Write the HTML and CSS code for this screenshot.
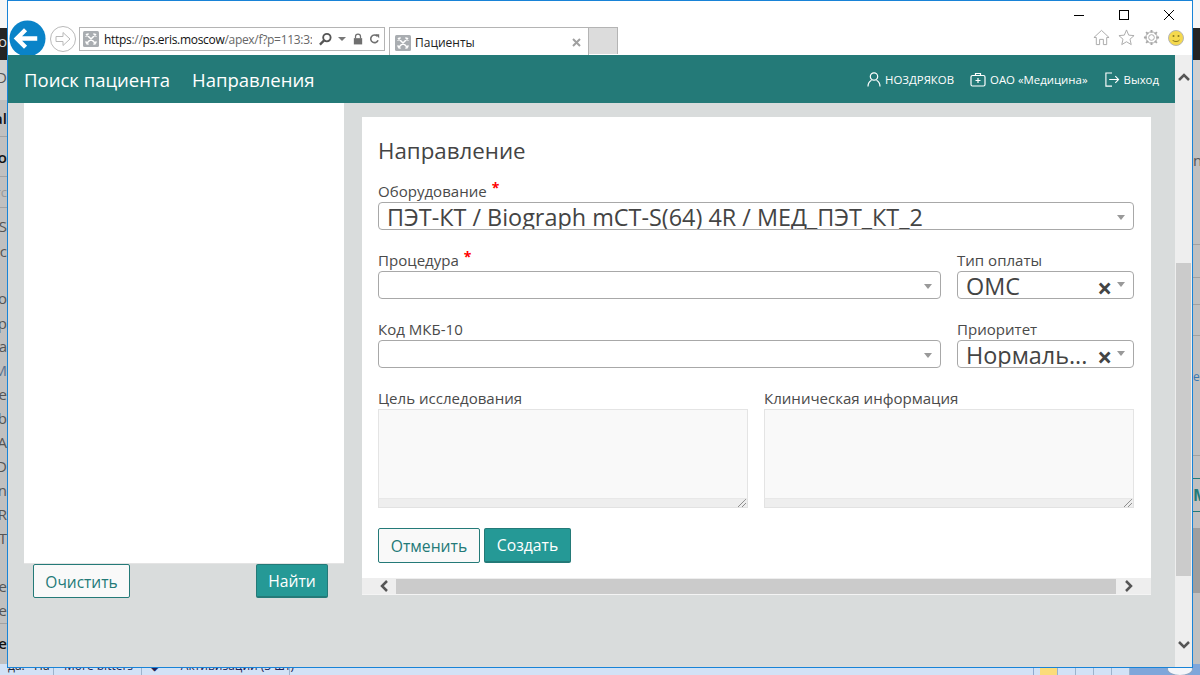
FILE: index.html
```html
<!DOCTYPE html>
<html lang="ru">
<head>
<meta charset="utf-8">
<title>Пациенты</title>
<link rel="stylesheet" href="styles.css">
</head>
<body>
<div class="desktop">
  <div class="behind behind-top"></div>
  <div class="behind behind-dark"></div>
  <div class="behind behind-light"></div>
  <span class="bit bit-dark l1">co</span>
  <span class="bit l2">D</span>
  <span class="bit b l3">al</span>
  <span class="bit b l4">o</span>
  <span class="bit g l5">rc</span>
  <span class="bit l6">S</span>
  <span class="bit l7">c</span>
  <span class="bit l8">To</span>
  <span class="bit l9">p</span>
  <span class="bit l10">sa</span>
  <span class="bit m l11">M</span>
  <span class="bit l12">se</span>
  <span class="bit l13">ab</span>
  <span class="bit l14">A</span>
  <span class="bit l15">D</span>
  <span class="bit l16">In</span>
  <span class="bit l17">R</span>
  <span class="bit l18">T</span>
  <span class="bit l19">ce</span>
  <span class="bit l20">ce</span>
  <span class="bit b l21">ge</span>
  <i class="rule r1"></i><i class="rule r2"></i><i class="rule r3"></i><i class="rule r4"></i>
  <span class="bit-r p1">nt</span>
  <span class="bit-r blue p2">e</span>
  <span class="bit-r teal p3">Ме</span>
  <i class="rule-r q1"></i><i class="rule-r q2"></i><i class="rule-r q3"></i><i class="rule-r q4"></i><i class="rule-r q5"></i>
  <i class="rule-r t q6"></i><i class="rule-r t q7"></i>
  <i class="band-r"></i>

  <div class="taskbar">
    <span class="task task-a">да. · На ·</span>
    <span class="task task-b">More bitters</span>
    <span class="task task-c">◆ &nbsp;&nbsp;&nbsp;&nbsp;&nbsp; Активизации (3 шт)</span>
    <span class="task-fill"></span>
    <span class="tray"><i class="tray-on"></i><i></i><i></i><i></i><i></i><b class="tray-end"><em class="orb"></em></b></span>
  </div>

  <div class="window">
    <div class="chrome">
      <div class="winbtns">
        <svg class="wb" viewBox="0 0 12 12"><path d="M1 6.500h10" stroke="#000" fill="none"/></svg>
        <svg class="wb" viewBox="0 0 12 12"><rect x="1.500" y="1.500" width="9" height="9" stroke="#000" fill="none"/></svg>
        <svg class="wb" viewBox="0 0 12 12"><path d="M1 1l10 10M11 1L1 11" stroke="#000" fill="none"/></svg>
      </div>
      <div class="toolbar">
        <svg class="back" viewBox="0 0 38 38"><circle cx="19" cy="19" r="18.500" fill="#0a83c8"/><path d="M8 19h21M17 10l-9 9 9 9" stroke="#fff" stroke-width="4.500" fill="none"/></svg>
        <svg class="forward" viewBox="0 0 26 26"><circle cx="13" cy="13" r="12.500" fill="#fff" stroke="#b9b9b9"/><path d="M6 10.500h7v-4l7 6.500-7 6.500v-4H6z" fill="none" stroke="#b9b9b9"/></svg>
        <div class="address">
          <svg class="favicon" viewBox="0 0 16 16"><rect width="16" height="16" rx="1.500" fill="#a9adb1"/><path d="M3 3l10 10M13 3L3 13M2.500 5.500l3-3M10.500 13.500l3-3M2.500 10.500l3 3M10.500 2.500l3 3" stroke="#fff" stroke-width="1.500" fill="none"/></svg>
          <span class="url"><b>https</b>://<b>ps.eris.moscow</b>/apex/f?p=113:3:</span>
          <svg class="aico" viewBox="0 0 14 14"><circle cx="8.500" cy="5.500" r="4" stroke="#555" stroke-width="2" fill="none"/><path d="M5.500 8.500L1 13" stroke="#555" stroke-width="2.500"/></svg>
          <svg class="caret" viewBox="0 0 8 4"><path d="M0 0h8L4 4z" fill="#777"/></svg>
          <svg class="aico lock" viewBox="0 0 12 14"><rect x="1" y="6" width="10" height="7.500" fill="#6f6f6f"/><path d="M3 6.500V4a3 3 0 016 0v2.500" stroke="#6f6f6f" stroke-width="1.500" fill="none"/></svg>
          <svg class="aico refresh" viewBox="0 0 14 14"><path d="M11.500 8.500A4.800 4.800 0 1 1 10.500 3.500" stroke="#6f6f6f" stroke-width="2" fill="none"/><path d="M8 1h5v5z" fill="#6f6f6f"/></svg>
        </div>
        <div class="tab">
          <svg class="favicon" viewBox="0 0 16 16"><rect width="16" height="16" rx="1.500" fill="#a9adb1"/><path d="M3 3l10 10M13 3L3 13M2.500 5.500l3-3M10.500 13.500l3-3M2.500 10.500l3 3M10.500 2.500l3 3" stroke="#fff" stroke-width="1.500" fill="none"/></svg>
          <span class="tab-title">Пациенты</span>
          <svg class="tab-x" viewBox="0 0 9 9"><path d="M1 1l7 7M8 1L1 8" stroke="#a0a0a0" stroke-width="2"/></svg>
        </div>
        <div class="newtab"></div>
        <div class="toolicons">
          <svg class="ti" viewBox="0 0 18 18"><path d="M1 9l8-7.500L17 9h-2.500v7.500H11V11H7v5.500H3.500V9z" fill="#fff" stroke="#a8a8a8"/></svg>
          <svg class="ti" viewBox="0 0 18 18"><path d="M9 1l2.300 5.500 5.700.5-4.300 3.800 1.300 5.700L9 13.500l-5 3 1.300-5.700L1 7l5.700-.5z" fill="#fff" stroke="#a8a8a8"/></svg>
          <svg class="ti" viewBox="0 0 18 18"><circle cx="9" cy="9" r="3" fill="none" stroke="#a8a8a8"/><circle cx="9" cy="9" r="6" fill="none" stroke="#a8a8a8" stroke-width="1"/><path d="M9 1v3M9 14v3M1 9h3M14 9h3M3.300 3.300l2.100 2.100M12.600 12.600l2.100 2.100M14.700 3.300l-2.100 2.100M5.400 12.600l-2.100 2.100" stroke="#a8a8a8" stroke-width="2"/></svg>
          <svg class="ti smile" viewBox="0 0 16 16"><circle cx="8" cy="8" r="7.500" fill="#f5d94e" stroke="#b5b5b5"/><circle cx="5.500" cy="6" r="1" fill="#8a7a20"/><circle cx="10.500" cy="6" r="1" fill="#8a7a20"/><path d="M4.500 10c1.500 2 5.500 2 7 0" stroke="#8a7a20" fill="none"/></svg>
        </div>
      </div>
    </div>

    <div class="viewport">
      <div class="page">
        <header class="topbar">
          <nav class="mainnav"><a>Поиск пациента</a><a>Направления</a></nav>
          <div class="usernav">
            <span class="uitem"><svg class="uico" viewBox="0 0 14 15"><circle cx="7" cy="4.500" r="3.700" fill="none" stroke="#fff" stroke-width="1.200"/><path d="M1 14.500c0-3.500 2-5.500 3.500-6.300M13 14.500c0-3.500-2-5.500-3.500-6.300" fill="none" stroke="#fff" stroke-width="1.200"/></svg>НОЗДРЯКОВ</span>
            <span class="uitem"><svg class="uico wide" viewBox="0 0 16 15"><rect x="1" y="3.500" width="14" height="10.500" rx="1.500" fill="none" stroke="#fff" stroke-width="1.200"/><path d="M5.500 3.500V1.500h5v2M8 6v5M5.500 8.500h5" fill="none" stroke="#fff" stroke-width="1.200"/></svg>ОАО «Медицина»</span>
            <span class="uitem"><svg class="uico wide" viewBox="0 0 16 16"><path d="M8 1H1.500v14H8M5 8h10M11.500 4.500L15 8l-3.500 3.500" fill="none" stroke="#fff" stroke-width="1.200"/></svg>Выход</span>
          </div>
        </header>
        <main class="content">
          <aside class="side">
            <div class="side-card"></div>
            <div class="side-actions">
              <button class="btn btn-light">Очистить</button>
              <button class="btn btn-primary">Найти</button>
            </div>
          </aside>
          <section class="card">
            <div class="card-body">
              <h2 class="card-title">Направление</h2>
              <div class="row-full">
                <div class="field">
                  <label class="lbl">Оборудование<sup class="req">*</sup></label>
                  <div class="select"><span class="val">ПЭТ-КТ / Biograph mCT-S(64) 4R / МЕД_ПЭТ_КТ_2</span><i class="arrow"></i></div>
                </div>
              </div>
              <div class="row">
                <div class="field">
                  <label class="lbl">Процедура<sup class="req">*</sup></label>
                  <div class="select"><span class="val"></span><i class="arrow"></i></div>
                </div>
                <div class="field">
                  <label class="lbl">Тип оплаты</label>
                  <div class="select"><span class="val">ОМС</span><span class="clear">×</span><i class="arrow up"></i></div>
                </div>
              </div>
              <div class="row">
                <div class="field">
                  <label class="lbl">Код МКБ-10</label>
                  <div class="select"><span class="val"></span><i class="arrow"></i></div>
                </div>
                <div class="field">
                  <label class="lbl">Приоритет</label>
                  <div class="select"><span class="val">Нормаль...</span><span class="clear">×</span><i class="arrow up"></i></div>
                </div>
              </div>
              <div class="row2">
                <div class="field">
                  <label class="lbl">Цель исследования</label>
                  <div class="area"></div>
                  <div class="resize"><svg viewBox="0 0 8 8"><path d="M0 8l8-8M4 8l4-4" stroke="#666" stroke-dasharray="1 .5"/></svg></div>
                </div>
                <div class="field">
                  <label class="lbl">Клиническая информация</label>
                  <div class="area"></div>
                  <div class="resize"><svg viewBox="0 0 8 8"><path d="M0 8l8-8M4 8l4-4" stroke="#666" stroke-dasharray="1 .5"/></svg></div>
                </div>
              </div>
              <div class="actions">
                <button class="btn btn-light">Отменить</button>
                <button class="btn btn-primary">Создать</button>
              </div>
            </div>
            <div class="hscroll">
              <svg class="chev" viewBox="0 0 10 12"><path d="M8 1L3 6l5 5" stroke="#555" stroke-width="2.500" fill="none"/></svg>
              <div class="hthumb"></div>
              <svg class="chev" viewBox="0 0 10 12"><path d="M2 1l5 5-5 5" stroke="#555" stroke-width="2.500" fill="none"/></svg>
            </div>
          </section>
        </main>
      </div>
      <div class="vscroll">
        <svg class="vchev" viewBox="0 0 12 10"><path d="M1 8l5-5 5 5" stroke="#555" stroke-width="2.500" fill="none"/></svg>
        <div class="vspace"></div>
        <div class="vthumb"></div>
        <div class="vrest"></div>
        <svg class="vchev" viewBox="0 0 12 10"><path d="M1 2l5 5 5-5" stroke="#555" stroke-width="2.500" fill="none"/></svg>
      </div>
    </div>
  </div>
</div>
</body>
</html>
```

FILE: styles.css
```css
* { box-sizing: border-box; }
html, body { margin: 0; padding: 0; height: 100%; overflow: hidden; }
body { font-family: "Open Sans", "Noto Sans", sans-serif; color: #444; }

.desktop { position: relative; width: 1200px; height: 675px; background: #c0c0c0; overflow: hidden; }
.behind { position: absolute; left: 0; right: 0; }
.behind-top { top: 0; height: 28px; background: #f6f6f6; }
.behind-dark { top: 28px; height: 32px; background: #242424; }
.behind-light { top: 60px; height: 40px; background: #d0d0d0; }

.bit { position: absolute; right: 1193px; font: 15px/20px "Open Sans", sans-serif; color: #555; white-space: nowrap; }
.bit.b { color: #111; font-weight: 600; }
.bit.g { color: #999; font-size: 13px; }
.bit.m { color: #5c7490; }
.bit-dark { color: #ddd; }
.l1 { top: 31px; } .l2 { top: 67px; } .l3 { top: 108px; } .l4 { top: 147px; } .l5 { top: 182px; }
.l6 { top: 216px; } .l7 { top: 241px; } .l8 { top: 288px; } .l9 { top: 313px; } .l10 { top: 336px; }
.l11 { top: 360px; } .l12 { top: 384px; } .l13 { top: 408px; } .l14 { top: 432px; } .l15 { top: 456px; }
.l16 { top: 480px; } .l17 { top: 504px; } .l18 { top: 528px; } .l19 { top: 576px; } .l20 { top: 600px; } .l21 { top: 633px; }
.rule { position: absolute; left: 0; width: 8px; height: 1px; background: #a2a2a2; }
.r1 { top: 136px; } .r2 { top: 176px; } .r3 { top: 207px; } .r4 { top: 623px; }
.bit-r { position: absolute; left: 1193px; font: 15px/20px "Open Sans", sans-serif; color: #555; white-space: nowrap; }
.p1 { top: 150px; } .p2 { top: 367px; } .p3 { top: 485px; }
.bit-r.blue { color: #3a78b0; font-size: 12px; }
.bit-r.teal { color: #247a78; font-weight: 700; font-size: 16px; }
.rule-r { position: absolute; left: 1193px; width: 7px; height: 1px; background: #a2a2a2; }
.q1 { top: 244px; } .q2 { top: 277px; } .q3 { top: 304px; } .q4 { top: 335px; } .q5 { top: 455px; }
.q6 { top: 478px; } .q7 { top: 511px; }
.rule-r.t { background: #247a78; }
.band-r { position: absolute; left: 1193px; top: 528px; width: 7px; height: 65px; background: #9e9e9e; }

.taskbar { position: absolute; left: 0; right: 0; top: 664px; height: 11px; background: #d2e2f6; display: flex; font: 12px/14px "Open Sans", sans-serif; color: #223; overflow: hidden; }
.task { height: 11px; border-right: 1px solid #9cb3cc; padding: 0 0 0 8px; white-space: nowrap; line-height: 3px; }
.task-a { width: 54px; }
.task-b { width: 88px; padding-left: 10px; color: #225; }
.task-c { width: 148px; color: #225; }
.task-fill { flex: 1; }
.tray { width: 167px; flex: none; display: flex; padding-left: 6px; border-left: 1px solid #8faad0; }
.tray i { width: 18px; flex: none; border-right: 1px solid #9cb3cc; }
.tray .tray-on { background: #fbdc7a; }
.tray-end { flex: 1; background: #7fa6da; position: relative; }
.orb { position: absolute; left: 37px; top: -2px; width: 26px; height: 14px; border-radius: 50%; background: #f4f6fa; border: 1px solid #8ea4c0; }

.window { position: absolute; left: 7px; top: 0; width: 1186px; height: 668px; border: 1px solid #1883d7; display: flex; flex-direction: column; background: #fff; }

.chrome { height: 54px; flex: none; background: #fff; position: relative; }
.winbtns { position: absolute; top: 8px; right: 17px; display: flex; gap: 33px; }
.wb { width: 12px; height: 12px; display: block; }
.toolbar { position: absolute; left: 0; right: 0; top: 19px; height: 35px; display: flex; align-items: flex-start; }
.back { width: 37px; height: 37px; margin: 0 0 0 1px; flex: none; position: relative; z-index: 1; clip-path: inset(0 0 2px 0); }
.forward { width: 26px; height: 26px; margin: 6px 0 0 4px; flex: none; }
.address { width: 306px; height: 24px; margin: 7px 0 0 3px; border: 1px solid #b4b4b4; display: flex; align-items: center; padding-left: 3px; flex: none; }
.favicon { width: 16px; height: 16px; flex: none; display: block; }
.url { width: 208px; margin: 1px 7px 0 5px; font: 12px/16px "Open Sans", sans-serif; color: #666; white-space: nowrap; overflow: hidden; letter-spacing: -0.3px; flex: none; }
.url b { font-weight: 400; color: #111; }
.aico { width: 13px; height: 14px; flex: none; margin-right: 6px; }
.aico.lock { width: 10px; }
.aico.refresh { width: 11px; margin-right: 0; }
.caret { width: 8px; height: 4px; flex: none; margin-right: 7px; }
.tab { width: 200px; height: 28px; margin: 7px 0 0 4px; border: 1px solid #b4b4b4; border-bottom: 0; display: flex; align-items: center; padding: 2px 6px 0 5px; flex: none; }
.tab-title { flex: 1; margin-left: 4px; font: 12px/16px "Open Sans", sans-serif; color: #222; }
.tab-x { width: 9px; height: 9px; margin-right: 1px; }
.newtab { width: 29px; height: 27px; margin-top: 7px; background: #dcdcdc; border: 1px solid #b4b4b4; border-left: 0; border-bottom: 0; flex: none; }
.toolicons { position: absolute; right: 8px; top: 9px; display: flex; gap: 8px; align-items: center; }
.ti { width: 17px; height: 17px; display: block; }
.ti.smile { width: 16px; height: 16px; }

.viewport { flex: 1; display: flex; min-height: 0; }
.page { flex: 1; min-width: 0; background: #d9dcdc; display: flex; flex-direction: column; }
.topbar { height: 48px; background: #247a78; flex: none; display: flex; align-items: center; justify-content: space-between; padding: 1px 16px 0 16px; color: #fff; }
.mainnav { display: flex; gap: 22px; font-size: 18.550px; line-height: 26px; }
.usernav { display: flex; gap: 16px; font-size: 11.400px; line-height: 16px; }
.uitem { display: flex; align-items: center; gap: 4px; white-space: nowrap; }
.uico { width: 14px; height: 15px; flex: none; }
.uico.wide { width: 16px; }

.content { flex: 1; display: flex; min-height: 0; padding-left: 16px; }
.side { width: 320px; flex: none; }
.side-card { height: 461px; background: #fff; border-bottom: 1px solid #e4e4e4; }
.side-actions { display: flex; justify-content: space-between; padding: 0 16px 0 9px; }
.side-actions .btn { padding-top: 1px; }
.card { width: 789px; height: 478px; margin: 14px 0 0 18px; background: #fff; flex: none; display: flex; flex-direction: column; }
.card-body { flex: 1; padding: 18px 17px 0 16px; min-height: 0; }
.card-title { margin: 0; font-size: 22.300px; line-height: 32px; font-weight: 400; color: #444; height: 46px; }

.lbl { display: block; font-size: 15.050px; line-height: 20px; height: 21px; color: #4a4a4a; white-space: nowrap; }
.req { color: #f00; font-size: 14px; font-weight: 700; line-height: 0; margin-left: 5px; position: relative; top: 2px; vertical-align: super; }
.field { min-width: 0; }
.row-full { height: 69px; }
.select { height: 28px; border: 1px solid #a8a8a8; border-radius: 4px; display: flex; align-items: flex-start; padding-left: 8px; position: relative; overflow: hidden; background: #fff; }
.val { flex: 1; min-width: 0; height: 26px; font-size: 23.400px; line-height: 28px; color: #444; white-space: nowrap; overflow: hidden; }
.arrow { position: absolute; right: 8px; top: 12px; width: 0; height: 0; border-left: 4px solid transparent; border-right: 4px solid transparent; border-top: 5px solid #999; }
.arrow.up { top: 10px; }
.clear { position: absolute; right: 21px; top: 0; font-size: 26px; line-height: 32px; font-weight: 700; color: #444; }
.row { display: grid; grid-template-columns: 563px 177px; gap: 16px; height: 69px; }
.row2 { display: grid; grid-template-columns: 370px 370px; gap: 16px; height: 140px; }
.area { height: 90px; background: #f9f9f9; border: 1px solid #e4e4e4; border-bottom: 1px solid #e8e8e8; }
.resize { height: 9px; background: #eee; border: 1px solid #e2e2e2; border-top: 0; display: flex; justify-content: flex-end; align-items: flex-end; padding: 0 1px 0 0; }
.resize svg { width: 8px; height: 8px; display: block; }
.actions { display: flex; gap: 4px; }

.btn { font-family: "Open Sans", sans-serif; font-size: 15.700px; line-height: 20px; height: 34px; border-radius: 2px; padding: 0; cursor: pointer; margin: 0; }
.btn-light { background: #f9f9f9; border: 1px solid #247a78; color: #247a78; }
.btn-primary { background: #259996; border: 1px solid #247a78; border-bottom-width: 2px; color: #fff; }
.side-actions .btn-light { width: 97px; font-size: 15.500px; }
.side-actions .btn-primary { width: 72px; }
.actions .btn { height: 35px; }
.actions .btn-light { width: 102px; }
.actions .btn-primary { width: 87px; }

.hscroll { height: 17px; background: #eee; display: flex; align-items: center; flex: none; border-bottom: 1px solid #f4f4f4; }
.chev { width: 10px; height: 12px; flex: none; }
.hthumb { flex: 1; height: 15px; background: #cbcbcb; }
.hscroll .chev:first-child { margin: 0 7px 0 17px; }
.hscroll .chev:last-child { margin: 0 17px 0 8px; }

.vscroll { width: 17px; flex: none; background: #eee; display: flex; flex-direction: column; align-items: center; }
.vchev { width: 12px; height: 10px; flex: none; }
.vchev:first-child { margin-top: 17px; }
.vchev:last-child { margin-bottom: 17px; }
.vspace { height: 181px; flex: none; }
.vthumb { width: 15px; height: 313px; background: #cbcbcb; flex: none; }
.vrest { flex: 1; }
```
